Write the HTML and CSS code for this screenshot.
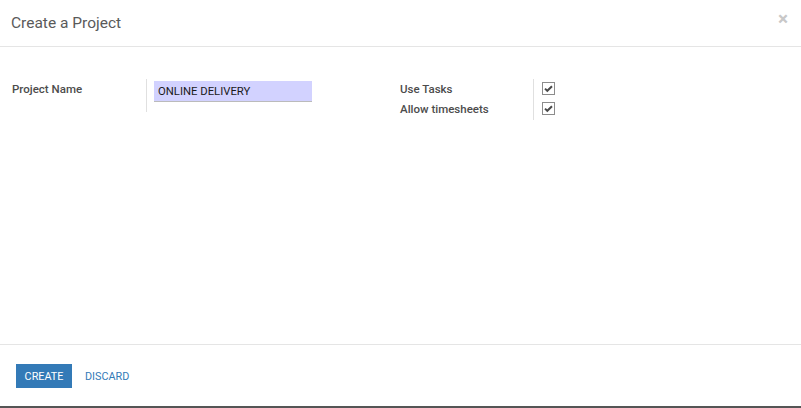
FILE: index.html
```html
<!DOCTYPE html>
<html>
<head>
<meta charset="utf-8">
<link rel="stylesheet" href="styles.css">
</head>
<body>
<div class="modal">
  <header class="modal-header">
    <h4 class="modal-title">Create a Project</h4>
    <span class="close">×</span>
  </header>
  <main class="modal-body">
    <div class="group">
      <div class="label">Project Name</div>
      <div class="sep"></div>
      <div class="field"><div class="input">ONLINE DELIVERY</div></div>
    </div>
    <div class="group group-right">
      <div class="labels">
        <div class="label">Use Tasks</div>
        <div class="label">Allow timesheets</div>
      </div>
      <div class="sep sep-right"></div>
      <div class="checks">
        <span class="cb"><svg viewBox="0 0 13 13" width="13" height="13"><path d="M3 6.6 L5.3 8.8 L10 4.2" fill="none" stroke="#4a4a4a" stroke-width="2"/></svg></span>
        <span class="cb"><svg viewBox="0 0 13 13" width="13" height="13"><path d="M3 6.6 L5.3 8.8 L10 4.2" fill="none" stroke="#4a4a4a" stroke-width="2"/></svg></span>
      </div>
    </div>
  </main>
  <footer class="modal-footer">
    <button class="btn btn-primary">CREATE</button>
    <button class="btn btn-link">DISCARD</button>
  </footer>
</div>
<div class="bottom-bar"></div>
</body>
</html>
```
FILE: styles.css
```css
html, body {
  margin: 0;
  padding: 0;
  background: #fff;
  font-family: Roboto, "Noto Sans", sans-serif;
  color: #4c4c4c;
}
.modal {
  width: 801px;
  height: 406px;
  display: flex;
  flex-direction: column;
}
.modal-header {
  height: 47px;
  border-bottom: 1px solid #e5e5e5;
  display: flex;
  align-items: flex-start;
  justify-content: space-between;
  box-sizing: border-box;
}
.modal-title {
  margin: 12px 0 0 11px;
  font-size: 15.5px;
  font-weight: 400;
  line-height: 22px;
  color: #5a5a5a;
}
.close {
  margin: 8px 13px 0 0;
  font-size: 19px;
  font-weight: 700;
  color: #c8c8c8;
  line-height: 22px;
}
.modal-body {
  flex: 1;
  display: flex;
  padding: 32px 0 0 12px;
  box-sizing: border-box;
}
.group {
  display: flex;
  align-items: flex-start;
  width: 388px;
}
.label {
  font-size: 11.5px;
  font-weight: 500;
  line-height: 20px;
  color: #4c4c4c;
}
.group > .label {
  width: 134px;
}
.sep {
  width: 1px;
  height: 33px;
  background: #e0e0e0;
}
.field {
  padding-left: 7px;
}
.input {
  width: 154px;
  height: 20px;
  padding-left: 4px;
  background: #d2d2ff;
  border-bottom: 1px solid #bbb;
  font-size: 11.3px;
  line-height: 21px;
  color: #1a1a1a;
  margin-top: 2px;
}
.group-right {
  width: auto;
}
.labels {
  width: 133px;
}
.sep-right {
  height: 41px;
}
.checks {
  display: flex;
  flex-direction: column;
  gap: 7px;
  padding: 3px 0 0 8px;
}
.cb {
  width: 11px;
  height: 11px;
  border: 1px solid #8c8c8c;
  display: block;
  position: relative;
}
.cb svg {
  position: absolute;
  left: -1px;
  top: -1px;
}
.modal-footer {
  height: 62px;
  border-top: 1px solid #e5e5e5;
  display: flex;
  align-items: center;
  padding: 0 0 0 16px;
  gap: 1px;
  box-sizing: border-box;
}
.btn {
  font-family: Roboto, sans-serif;
  font-size: 10.8px;
  border: 0;
  height: 24px;
  padding: 0;
  cursor: pointer;
  margin-top: 1px;
}
.btn-primary {
  background: #337ab7;
  color: #fff;
  width: 56px;
}
.btn-link {
  background: none;
  color: #337ab7;
  padding: 0 12px;
}
.bottom-bar {
  height: 2px;
  background: #555;
}
```
